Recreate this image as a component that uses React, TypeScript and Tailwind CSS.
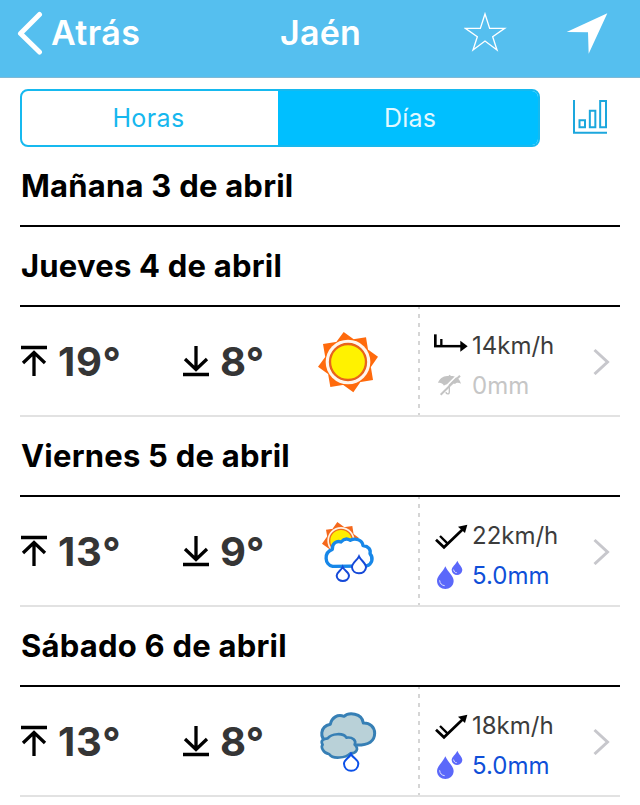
type Sky = "sun" | "sunRain" | "cloudRain";
type Wind = "east" | "northeast";

interface Forecast {
  title: string;
  max?: string;
  min?: string;
  sky?: Sky;
  wind?: Wind;
  speed?: string;
  rain?: string;
  wet?: boolean;
}

const days: Forecast[] = [
  { title: "Mañana 3 de abril" },
  { title: "Jueves 4 de abril", max: "19°", min: "8°", sky: "sun", wind: "east", speed: "14km/h", rain: "0mm", wet: false },
  { title: "Viernes 5 de abril", max: "13°", min: "9°", sky: "sunRain", wind: "northeast", speed: "22km/h", rain: "5.0mm", wet: true },
  { title: "Sábado 6 de abril", max: "13°", min: "8°", sky: "cloudRain", wind: "northeast", speed: "18km/h", rain: "5.0mm", wet: true },
];

function SkyIcon({ sky }: { sky: Sky }) {
  return (
    <svg className="h-[108px] w-[118px] shrink-0" viewBox="0 -9 354 324" fill="none">
      {sky === "sun" && (
        <>
          <path d="M131 66L234 140L160 247L54 170Z M198 82L219 210L91 231L69 102Z" fill="#ff6a0c" />
          <circle cx="144" cy="156" r="67" fill="#fff6ee" />
          <circle cx="144" cy="156" r="54" fill="#fff200" stroke="#e8641b" strokeWidth="7" />
        </>
      )}
      {sky === "sunRain" && (
        <>
          <path d="M112 66L176 113L131 178L66 131Z M157 78L169 156L92 168L78 89Z" fill="#f5681c" />
          <circle cx="123" cy="122" r="41" fill="#fff3e6" />
          <circle cx="123" cy="122" r="34" fill="#ffee00" stroke="#ec6b1d" strokeWidth="4" />
          <path
            d="M98 199C73 194 71 157 97 148C96 130 110 121 123 126C132 116 143 116 151 121C166 113 187 119 189 137C206 139 213 149 210 161C221 174 217 193 199 198Z"
            fill="#fff"
            stroke="#1787e8"
            strokeWidth="10"
            strokeLinejoin="round"
          />
          <path d="M177 169C171 182 155 189 156 202C157 226 196 226 198 202C198 189 183 182 177 169Z" fill="#fff" stroke="#1549d8" strokeWidth="6" />
          <path d="M128 201C124 211 110 216 110 227C111 248 146 248 147 227C147 216 132 211 128 201Z" fill="#fff" stroke="#1549d8" strokeWidth="6" />
        </>
      )}
      {sky === "cloudRain" && (
        <>
          <path
            d="M82 156C58 145 59 110 91 103C95 82 113 72 132 79C145 67 186 67 190 99C209 98 224 111 224 130C224 153 207 166 168 165Z"
            fill="#b9d1d8"
            stroke="#367fb5"
            strokeWidth="9"
            strokeLinejoin="round"
          />
          <path
            d="M87 192C68 189 62 169 68 164C60 152 70 146 83 145C94 131 130 127 139 143C158 140 170 152 164 164C178 176 169 191 151 190C137 204 98 209 87 192Z"
            fill="#b9d1d8"
            stroke="#367fb5"
            strokeWidth="8"
            strokeLinejoin="round"
          />
          <path d="M153 192C148 204 132 209 132 221C133 249 174 249 175 221C175 209 158 204 153 192Z" fill="#fff" stroke="#0b50e8" strokeWidth="6" />
        </>
      )}
    </svg>
  );
}

function WindIcon({ wind }: { wind: Wind }) {
  return (
    <svg className="h-10 w-[38px] shrink-0" viewBox="66 75 114 120" fill="none" stroke="#000">
      {wind === "east" ? (
        <>
          <path d="M76 103V139" strokeWidth="8" />
          <path d="M94 117V139" strokeWidth="7" />
          <path d="M72 138.500H155" strokeWidth="7.500" />
          <path d="M151 122L173 138.500L151 155Z" fill="#000" stroke="none" />
        </>
      ) : (
        <>
          <path d="M78 149L102 172L160 116" strokeWidth="8" />
          <path d="M90 138L113 161" strokeWidth="7" />
          <path d="M172 104L165 129L144 110Z" fill="#000" stroke="none" />
        </>
      )}
    </svg>
  );
}

function RainIcon({ wet }: { wet: boolean }) {
  return (
    <svg className="h-10 w-[38px] shrink-0" viewBox="66 195 114 120" fill="none">
      {wet ? (
        <>
          <path d="M106 229C99 246 81 258 81 273C82 305 130 305 131 273C131 258 113 246 106 229Z" fill="#5b68fa" />
          <path d="M142 212C138 223 125 230 125 240C127 260 155 260 157 240C157 230 146 223 142 212Z" fill="#5b68fa" />
          <path d="M89 272C90 281 95 286 103 287M131 240C132 245 135 248 139 248" stroke="#dfe3ff" strokeWidth="3" strokeLinecap="round" />
        </>
      ) : (
        <>
          <path d="M84 249C88 235 101 226 115 228L119 224L123 228C137 228 149 236 153 251C146 247 139 247 135 252C130 249 124 249 119 254C113 253 106 253 102 257C97 249 90 247 84 249Z" fill="#c3c3c3" />
          <path d="M118 250V275C118 284 108 283 108 276" stroke="#c3c3c3" strokeWidth="4" />
          <path d="M88 279L145 222" stroke="#fff" strokeWidth="5" />
          <path d="M92 284L150 227" stroke="#c3c3c3" strokeWidth="6" />
        </>
      )}
    </svg>
  );
}

function LimitIcon({ up }: { up?: boolean }) {
  return (
    <svg className="h-8 w-7 shrink-0" viewBox="0 0 28 32" fill="none" stroke="#000" strokeWidth="3.300">
      {up ? (
        <path d="M1 2.500H27M14 31V7M3 18L14 7.500L25 18" />
      ) : (
        <path d="M1 29.500H27M14 1V25M3 14L14 24.500L25 14" />
      )}
    </svg>
  );
}

function DayRow({ day }: { day: Forecast }) {
  return (
    <div className="flex h-[110px] border-b-2 border-[#e2e2e2]">
      <div className="flex w-[162px] items-center">
        <LimitIcon up />
        <span className="ml-[10px] pt-[2px] text-[40px] font-bold leading-none tracking-[0.7px] text-[#353535]">{day.max}</span>
      </div>
      <div className="flex w-[118px] items-center">
        <LimitIcon />
        <span className="ml-[10px] pt-[2px] text-[40px] font-bold leading-none text-[#353535]">{day.min}</span>
      </div>
      <SkyIcon sky={day.sky!} />
      <div className="w-[2px] bg-[repeating-linear-gradient(to_bottom,#d5d5d5_0px,#d5d5d5_2px,transparent_2px,transparent_7px,#d5d5d5_7px,#d5d5d5_9px)]" />
      <div className="w-[168px] pl-3 pt-[18px]">
        <div className="flex h-10 items-center">
          <WindIcon wind={day.wind!} />
          <span className="ml-[2px] pt-[2px] text-2xl leading-none text-[#3c3c3c]">{day.speed}</span>
        </div>
        <div className="flex h-10 items-center">
          <RainIcon wet={!!day.wet} />
          <span className={day.wet ? "ml-[2px] pt-[2px] text-2xl leading-none text-[#0f4fd8]" : "ml-[2px] pt-[2px] text-2xl leading-none text-[#c6c6c6]"}>{day.rain}</span>
        </div>
      </div>
      <svg className="ml-[3px] mt-10 h-7 w-5" viewBox="0 0 20 28" fill="none" stroke="#c7c7cc" strokeWidth="3">
        <path d="M3.500 3L16.500 15L3.500 27" />
      </svg>
    </div>
  );
}

export default function App() {
  return (
    <div className="h-[805px] w-[640px] overflow-hidden bg-white font-['Inter','Liberation_Sans',sans-serif]">
      <header className="flex h-[78px] items-center border-b border-[#7fb9d6] bg-[#55bfef] pb-[12px] text-[34px] leading-none text-white">
        <svg className="ml-4 h-11 w-7" viewBox="0 0 28 44" fill="none" stroke="#fff" strokeWidth="5" strokeLinecap="round" strokeLinejoin="round">
          <path d="M23.500 3.500L4.500 22.500L23.500 41" />
        </svg>
        <span className="ml-[7px] w-[229px] font-semibold tracking-[0.4px]">Atrás</span>
        <span className="w-[184px] font-semibold tracking-[0.2px]">Jaén</span>
        <svg className="h-11 w-11" viewBox="432 30 132 132" fill="none" stroke="#fff" strokeWidth="4">
          <path d="M495 39L509 82L554 82L518 107L531 147L495 120L459 147L472 107L436 82L481 82Z" />
        </svg>
        <svg className="ml-[58px] h-11 w-11" viewBox="738 30 132 132" fill="#fff">
          <path d="M862 37L806 158L804 94L740 93Z" />
        </svg>
      </header>

      <div className="flex px-5 pt-[11px]">
        <div className="flex h-[58px] w-[520px] overflow-hidden rounded-lg border-2 border-[#16b9ef] bg-white text-[25px] leading-none">
          <button className="w-[256px] pr-[3px] tracking-[0.4px] text-[#16b7ee]">Horas</button>
          <button className="-my-0.5 -mr-0.5 flex-1 bg-[#00bfff] pl-[2px] tracking-[0.2px] text-[#e2f8ff]">Días</button>
        </div>
        <svg className="ml-8 mt-[10px] h-9 w-9" viewBox="756 297 108 108" fill="none" stroke="#1ca7dd" strokeWidth="6">
          <path d="M762 300V398.500H861M778.500 360.500H795V381.500H778.500ZM809.500 332H826V381.500H809.500ZM840.500 303H858V381.500H840.500Z" />
        </svg>
      </div>

      <main className="px-5">
        {days.map((day) => (
          <section key={day.title}>
            <h2 className="flex h-20 items-center whitespace-nowrap border-b-2 border-black pb-[2px] pl-px text-[31px] font-bold leading-none tracking-[0.22px] text-black">
              {day.title}
            </h2>
            {day.sky && <DayRow day={day} />}
          </section>
        ))}
      </main>
    </div>
  );
}
